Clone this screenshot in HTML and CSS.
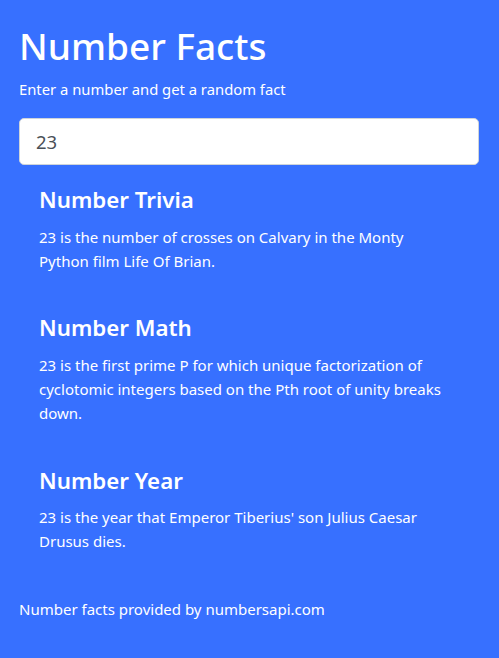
FILE: index.html
```html
<!DOCTYPE html>
<html lang="en">
<head>
<meta charset="utf-8">
<title>Number Facts</title>
<link rel="stylesheet" href="styles.css">
</head>
<body>
<main class="app">
  <h1 class="title">Number Facts</h1>
  <p class="subtitle">Enter a number and get a random fact</p>
  <input class="number-input" type="text" value="23">
  <section class="facts">
    <article class="fact">
      <h3 class="fact-title">Number Trivia</h3>
      <p class="fact-text">23 is the number of crosses on Calvary in the Monty Python film Life Of Brian.</p>
    </article>
    <article class="fact">
      <h3 class="fact-title">Number Math</h3>
      <p class="fact-text">23 is the first prime P for which unique factorization of cyclotomic integers based on the Pth root of unity breaks down.</p>
    </article>
    <article class="fact">
      <h3 class="fact-title">Number Year</h3>
      <p class="fact-text">23 is the year that Emperor Tiberius' son Julius Caesar Drusus dies.</p>
    </article>
  </section>
  <footer class="footer">Number facts provided by numbersapi.com</footer>
</main>
</body>
</html>
```
FILE: styles.css
```css
* { box-sizing: border-box; }
html, body {
  margin: 0;
  padding: 0;
  background: #3770ff;
  min-height: 100%;
}
body {
  font-family: "Noto Sans", "Open Sans", sans-serif;
  color: #ffffff;
}
.app {
  display: flex;
  flex-direction: column;
  padding: 22px 20px 40px 19px;
}
.title {
  margin: 0 0 8px 0;
  font-size: 37px;
  line-height: 48px;
  font-weight: 500;
}
.subtitle {
  margin: 0 0 17px 0;
  font-size: 14.8px;
  line-height: 22.5px;
}
.number-input {
  display: block;
  width: 100%;
  height: 47px;
  padding: 8px 16px;
  font-family: inherit;
  font-size: 18.5px;
  line-height: 29px;
  color: #495057;
  background: #ffffff;
  border: 1px solid #ced4da;
  border-radius: 5px;
  outline: none;
}
.facts {
  display: flex;
  flex-direction: column;
  gap: 41.5px;
  margin-top: 21.5px;
  padding: 0 30px 0 20px;
}
.fact-title {
  margin: 0 0 10px 0;
  font-size: 22.3px;
  line-height: 28.8px;
  font-weight: 600;
}
.fact-text {
  margin: 0;
  font-size: 15px;
  line-height: 24px;
}
.footer {
  margin-top: 44px;
  font-size: 15px;
  line-height: 24px;
}
```
